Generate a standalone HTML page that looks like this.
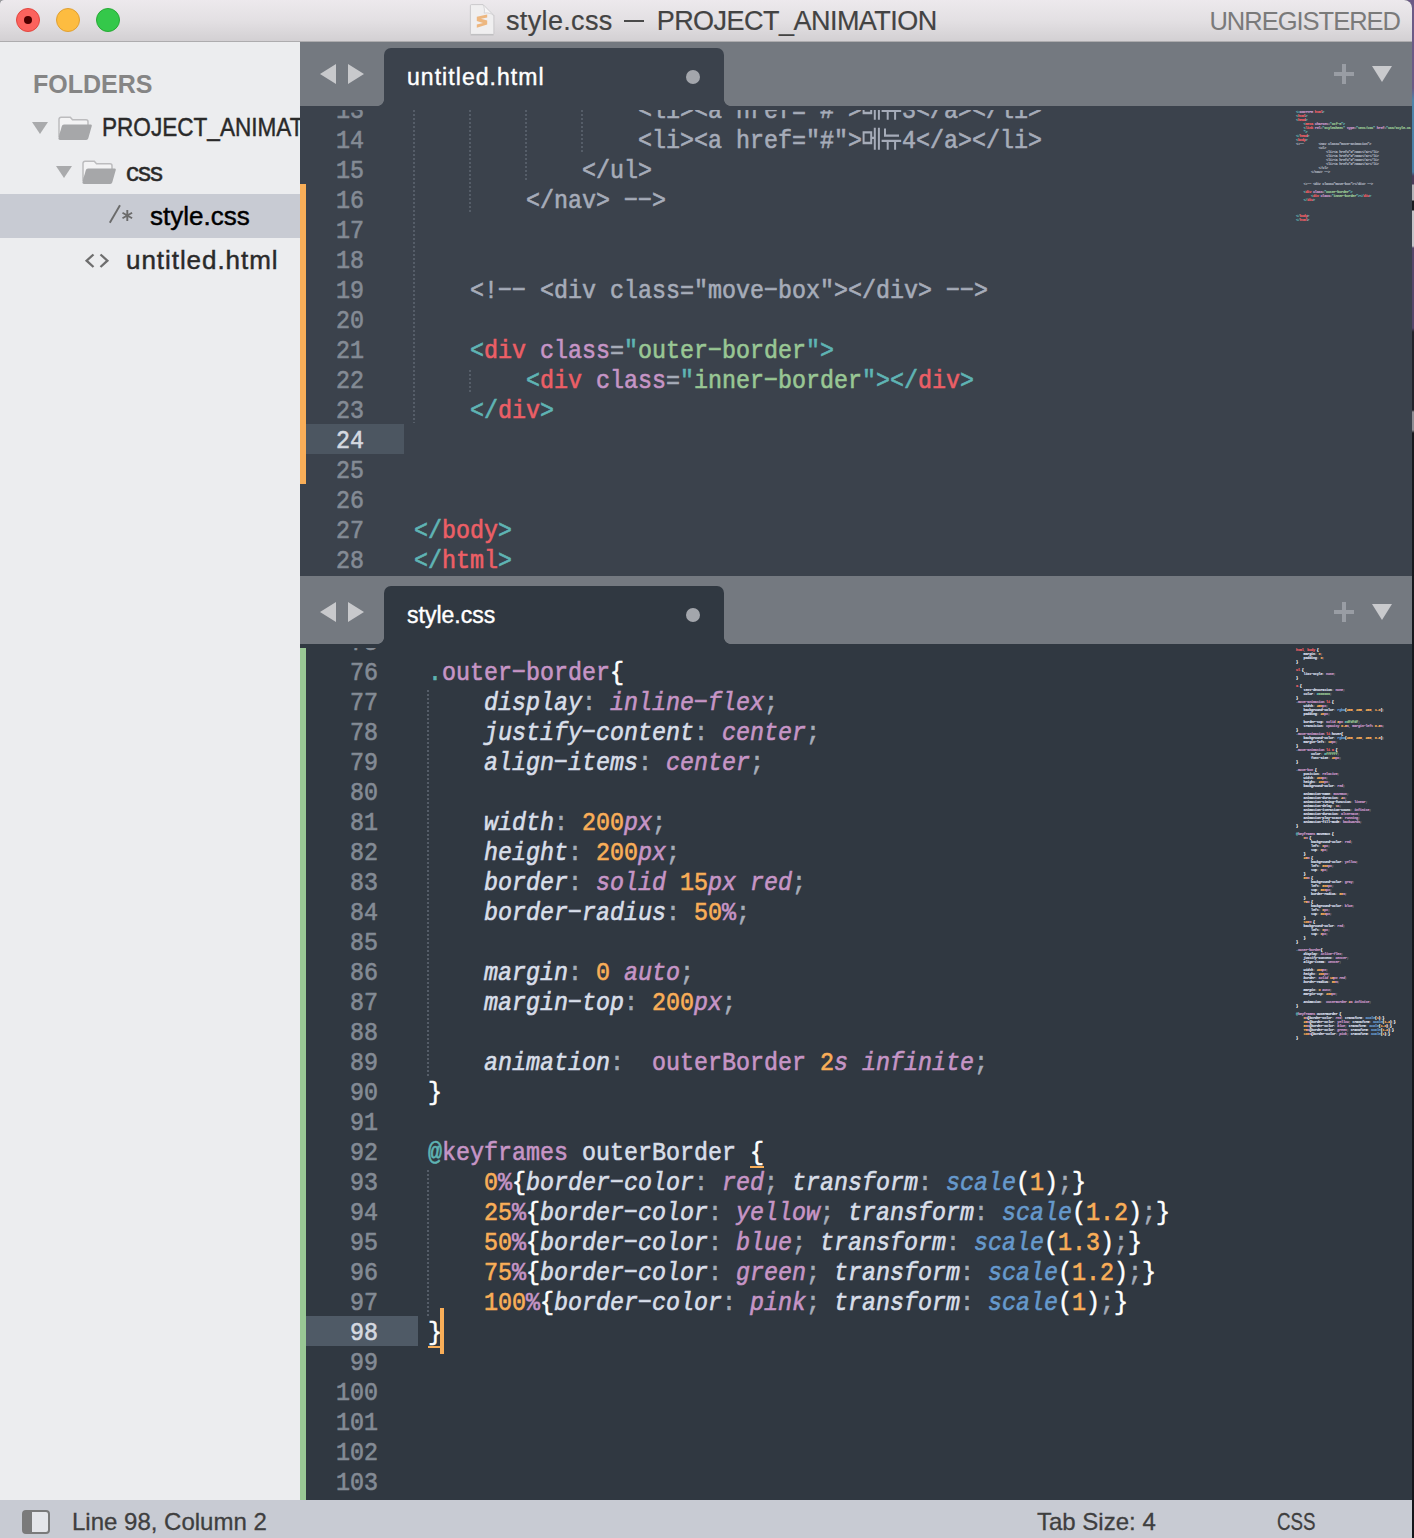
<!DOCTYPE html>
<html>
<head>
<meta charset="utf-8">
<title>style.css — PROJECT_ANIMATION</title>
<style>
*{box-sizing:border-box;margin:0;padding:0}
html,body{width:1414px;height:1538px;overflow:hidden;background:#6b5a86}
body{position:relative;font-family:"Liberation Sans",sans-serif}
#desk{position:absolute;left:1410px;top:0;width:4px;height:1538px;
  background:linear-gradient(#6b5a86 0,#6b5a86 88px,#4d84ab 100px,#4a7fa6 172px,#4a3d5a 176px,#4a3d5a 184px,#b4b4b8 185px,#b4b4b8 200px,#1b1b20 201px,#1b1b20 210px,#c4c4c8 211px,#c4c4c8 246px,#55476a 248px,#55476a 328px,#22222a 332px,#22222a 410px,#8e8e94 412px,#8e8e94 430px,#17181d 433px,#14151a 100%)}
#win{position:absolute;left:0;top:0;width:1412px;height:1538px;overflow:hidden;border-radius:4px 8px 0 0;background:#303841}
/* ---- title bar ---- */
#title{position:absolute;left:0;top:0;width:1412px;height:42px;
  background:linear-gradient(#ede9ed 0,#e3e0e3 50%,#d3d0d3 100%);border-bottom:1px solid #adacae}
.tl{position:absolute;top:8px;width:24px;height:24px;border-radius:50%}
#tl1{left:16px;background:#fc625d;border:1px solid #e2463f}
#tl1:after{content:"";position:absolute;left:7px;top:7px;width:8px;height:8px;border-radius:50%;background:#4d0000}
#tl2{left:56px;background:#fdbc40;border:1px solid #e0a033}
#tl3{left:96px;background:#34c84a;border:1px solid #27aa35}
#ttext{position:absolute;left:506px;top:5px;font-size:27px;line-height:32px;color:#434343;-webkit-text-stroke:0.2px #434343;white-space:nowrap}
#unreg{position:absolute;right:12px;top:5px;font-size:25.5px;letter-spacing:-1px;line-height:32px;color:#7a7a7a;white-space:nowrap}
#ticon{position:absolute;left:469px;top:3px}
/* ---- sidebar ---- */
#side{position:absolute;left:0;top:42px;width:300px;height:1458px;background:#ecedef;overflow:hidden}
#side .hd{position:absolute;left:33px;top:26px;font-size:25px;line-height:32px;font-weight:bold;color:#858585;white-space:nowrap}
.row{position:absolute;left:0;width:300px;height:44px;font-size:26px;line-height:44px;color:#2a2a2a;white-space:nowrap;-webkit-text-stroke:0.45px currentColor}
.row.sel{background:#c8cbd3;color:#000}
.row span{position:absolute;top:0}
.row svg{position:absolute}
/* ---- tab bars ---- */
.tabbar{position:absolute;left:300px;width:1112px;background:#747980;overflow:hidden}
.tab{position:absolute;left:84px;width:340px;border-radius:7px 7px 0 0}
.tab:before,.tab:after{content:"";position:absolute;bottom:0;width:7px;height:7px}
.tab:before{left:-7px;background:radial-gradient(circle at 0 0,transparent 6.6px,var(--c) 7.4px)}
.tab:after{right:-7px;background:radial-gradient(circle at 100% 0,transparent 6.6px,var(--c) 7.4px)}
.tab .lbl{position:absolute;left:23px;font-size:23px;color:#fff;white-space:nowrap;-webkit-text-stroke:0.4px #fff}
.tab .dot{position:absolute;left:302px;width:14px;height:14px;border-radius:50%;background:#a3a6ac}
/* ---- editors ---- */
.ed{position:absolute;left:300px;width:1112px;overflow:hidden;font-family:"Liberation Mono",monospace;font-size:23.33px;color:#d8dee9}
.ln,.no{position:absolute;height:30px;line-height:30px;white-space:pre;transform-origin:0 21.2px;transform:translateY(3px) scaleY(1.13);-webkit-text-stroke:0.55px currentColor}
.no{left:0;text-align:right;color:#848b95}
.cur.no{color:#d5d9e0}
.strip{position:absolute;left:0;width:6px}
.guide{position:absolute;width:2px;background:repeating-linear-gradient(#555d68 0,#555d68 2px,transparent 2px,transparent 4px)}
.t{color:#5fb4b4}.r{color:#ec5f66}.p{color:#c695c6}.pi{color:#c695c6;font-style:italic}
.g{color:#99c794}.o{color:#f9ae58}.bi{color:#6699cc;font-style:italic}.b{color:#6699cc}.w{color:#fff}
.wu{color:#fff}
.fi{color:#d8dee9;font-style:italic}.f{color:#d8dee9}.c{color:#a6acb9}.s{color:#a6acb9}
.nums .no{width:100%}
.ko{display:inline-block;vertical-align:top}
.caret{display:inline-block;width:3px;height:30px;background:#f9ae58;vertical-align:top;margin-left:-1px}
.mini{position:absolute;left:996px;width:900px;font-family:"Liberation Mono",monospace;font-size:27px;letter-spacing:-2.203px;line-height:30px;white-space:pre;
  transform-origin:0 0;transform:scale(0.134,0.13333);font-weight:bold;-webkit-text-stroke:1.2px currentColor}
.mini div{height:30px}
.mini .s{opacity:.55}
/* ---- status bar ---- */
#status{position:absolute;left:0;top:1500px;width:1412px;height:38px;background:#c8cbd3;font-size:24px;line-height:38px;color:#3f3f3f;white-space:nowrap;-webkit-text-stroke:0.3px #3f3f3f}
#status span{position:absolute;top:3px}
</style>
</head>
<body>
<div style="position:absolute;left:0;top:0;width:6px;height:6px;background:#9a9a9c"></div>
<div id="desk"></div>
<div id="win">

<!-- title bar -->
<div id="title">
  <div class="tl" id="tl1"></div><div class="tl" id="tl2"></div><div class="tl" id="tl3"></div>
  <svg id="ticon" width="28" height="36" viewBox="0 0 28 36">
    <path d="M2.4 1.6h11.6l10.9 11v17.8a1 1 0 0 1-1 1H2.400a1 1 0 0 1-1-1V2.6a1 1 0 0 1 1-1z" fill="#f0eff0" stroke="#c6c5c7" stroke-width="0.9"/>
    <path d="M1.6 31.9h23" stroke="#b9b8ba" stroke-width="1"/>
    <path d="M14 1.600c1.400 2.800 1.800 5.800 1.200 8.600c3-.8 6.600-.2 9.700 2.400z" fill="#f7f6f7" stroke="#cfced0" stroke-width="0.8"/>
    <path d="M18.200 11.400L7.800 13.800V18l6.200 2-6.200 1.500v3.300l10.400-3.200V17.600l-6.200-1.800 6.200-1.200z" fill="#edb780"/>
  </svg>
  <div id="ttext"><span style="letter-spacing:0.35px">style.css</span><span style="display:inline-block;width:20px;height:2px;background:#4a4a4a;vertical-align:8px;margin:0 13px 0 11px"></span><span style="letter-spacing:-0.53px">PROJECT_ANIMATION</span></div>
  <div id="unreg">UNREGISTERED</div>
</div>

<!-- sidebar -->
<div id="side">
  <div class="hd">FOLDERS</div>
  <div class="row" style="top:64px">
    <svg style="left:32px;top:16px" width="16" height="12"><path d="M0 0h16l-8 12z" fill="#a9aaac"/></svg>
    <svg style="left:58px;top:10px" width="34" height="24" viewBox="0 0 34 24"><path d="M1 21V3.3a2 2 0 0 1 2-2h9.3l2.2 2.5H28a2 2 0 0 1 2 2V10H6z" fill="#f3f3f4" stroke="#bcbcbe" stroke-width="1.5"/><path d="M6 8.6h26.4a1.3 1.3 0 0 1 1.3 1.7l-3.4 12a2.2 2.2 0 0 1-2.1 1.6H2a1.6 1.6 0 0 1-1.5-2l3.2-11.4a2.5 2.5 0 0 1 2.3-1.9z" fill="#a6a7a9"/></svg>
    <span style="left:102px;top:-1px;transform-origin:0 0;transform:scaleX(0.868)">PROJECT_ANIMATION</span>
  </div>
  <div class="row" style="top:108px">
    <svg style="left:56px;top:16px" width="16" height="12"><path d="M0 0h16l-8 12z" fill="#a9aaac"/></svg>
    <svg style="left:82px;top:10px" width="34" height="24" viewBox="0 0 34 24"><path d="M1 21V3.3a2 2 0 0 1 2-2h9.3l2.2 2.5H28a2 2 0 0 1 2 2V10H6z" fill="#f3f3f4" stroke="#bcbcbe" stroke-width="1.5"/><path d="M6 8.6h26.4a1.3 1.3 0 0 1 1.3 1.7l-3.4 12a2.2 2.2 0 0 1-2.1 1.6H2a1.6 1.6 0 0 1-1.5-2l3.2-11.4a2.5 2.5 0 0 1 2.3-1.9z" fill="#a6a7a9"/></svg>
    <span style="left:126px;letter-spacing:-1px">css</span>
  </div>
  <div class="row sel" style="top:152px">
    <svg style="left:108px;top:10px" width="27" height="20" viewBox="0 0 27 20"><g stroke="#6b6b6b" stroke-width="1.9" fill="none"><path d="M12 1.2L1.8 18.8"/><path d="M19.3 6v11M14.5 8.8l9.6 5.5M24.1 8.8l-9.6 5.5"/></g></svg>
    <span style="left:150px">style.css</span>
  </div>
  <div class="row" style="top:196px">
    <svg style="left:84px;top:15px" width="26" height="16" viewBox="0 0 26 16"><path d="M9.5 1.5L2.6 7.7l6.9 6.3M16.5 1.5l6.9 6.2-6.9 6.3" fill="none" stroke="#6e6e6e" stroke-width="2.3"/></svg>
    <span style="left:126px;letter-spacing:0.95px">untitled.html</span>
  </div>
</div>

<!-- top tab bar -->
<div class="tabbar" style="top:42px;height:64px">
  <svg style="position:absolute;left:20px;top:22px" width="46" height="20"><path d="M16 0v20L0 10zM28 0v20l16-10z" fill="#c8c9cc"/></svg>
  <div class="tab" style="top:6px;height:58px;background:#3b424c;--c:#3b424c">
    <div class="lbl" style="top:15px;line-height:28px;letter-spacing:1.05px">untitled.html</div>
    <div class="dot" style="top:22px"></div>
  </div>
  <svg style="position:absolute;left:1034px;top:22px" width="60" height="20"><path d="M8 0h4v8h8v4h-8v8H8v-8H0V8h8z" fill="#999da4"/><path d="M38 2h20L48 18z" fill="#c9cacd"/></svg>
</div>

<!-- top editor -->
<div class="ed" id="ed1" style="top:106px;height:470px;background:#3b424c">
  <div class="strip" style="top:78px;height:300px;background:#f9ae58"></div>
  <div style="position:absolute;left:6px;top:318px;width:98px;height:30px;background:#4c5661"></div>
  <div class="guide" style="left:113px;top:0;height:317px"></div>
  <div class="guide" style="left:169px;top:0;height:106px"></div>
  <div class="guide" style="left:225px;top:0;height:76px"></div>
  <div class="guide" style="left:281px;top:0;height:46px"></div>
  <div class="guide" style="left:169px;top:264px;height:24px"></div>
  <div class="nums" style="position:absolute;left:0;top:0;width:64px">
<div class="no" style="top:-12px">13</div>
<div class="no" style="top:18px">14</div>
<div class="no" style="top:48px">15</div>
<div class="no" style="top:78px">16</div>
<div class="no" style="top:108px">17</div>
<div class="no" style="top:138px">18</div>
<div class="no" style="top:168px">19</div>
<div class="no" style="top:198px">20</div>
<div class="no" style="top:228px">21</div>
<div class="no" style="top:258px">22</div>
<div class="no" style="top:288px">23</div>
<div class="no cur" style="top:318px">24</div>
<div class="no" style="top:348px">25</div>
<div class="no" style="top:378px">26</div>
<div class="no" style="top:408px">27</div>
<div class="no" style="top:438px">28</div>
  </div>
  <div class="code" style="position:absolute;left:114px;top:0">
<div class="ln" style="top:-12px">                <span class="c">&lt;li&gt;&lt;a href="#"&gt;</span><svg class="ko" width="40" height="30" viewBox="0 0 40 30"><g fill="none" stroke="#a6acb9" stroke-width="2"><path d="M1.6 7.2h7.6v9.4H1.6zM12.8 3.2v19.4M16.9 3.2v19.4M9.2 12h3.6"/><path d="M23 3.8v6.3h14M19.6 14.8h19.6M25.7 14.8v7.8M33.1 14.8v7.8"/></g></svg><span class="c">3&lt;/a&gt;&lt;/li&gt;</span></div>
<div class="ln" style="top:18px">                <span class="c">&lt;li&gt;&lt;a href="#"&gt;</span><svg class="ko" width="40" height="30" viewBox="0 0 40 30"><g fill="none" stroke="#a6acb9" stroke-width="2"><path d="M1.6 7.2h7.6v9.4H1.6zM12.8 3.2v19.4M16.9 3.2v19.4M9.2 12h3.6"/><path d="M23 3.8v6.3h14M19.6 14.8h19.6M25.7 14.8v7.8M33.1 14.8v7.8"/></g></svg><span class="c">4&lt;/a&gt;&lt;/li&gt;</span></div>
<div class="ln" style="top:48px">            <span class="c">&lt;/ul&gt;</span></div>
<div class="ln" style="top:78px">        <span class="c">&lt;/nav&gt; −−&gt;</span></div>
<div class="ln" style="top:108px"></div>
<div class="ln" style="top:138px"></div>
<div class="ln" style="top:168px">    <span class="c">&lt;!−− &lt;div class="move−box"&gt;&lt;/div&gt; −−&gt;</span></div>
<div class="ln" style="top:198px"></div>
<div class="ln" style="top:228px">    <span class="t">&lt;</span><span class="r">div</span> <span class="p">class</span><span class="s">=</span><span class="t">"</span><span class="g">outer−border</span><span class="t">"&gt;</span></div>
<div class="ln" style="top:258px">        <span class="t">&lt;</span><span class="r">div</span> <span class="p">class</span><span class="s">=</span><span class="t">"</span><span class="g">inner−border</span><span class="t">"&gt;&lt;/</span><span class="r">div</span><span class="t">&gt;</span></div>
<div class="ln" style="top:288px">    <span class="t">&lt;/</span><span class="r">div</span><span class="t">&gt;</span></div>
<div class="ln" style="top:318px"></div>
<div class="ln" style="top:348px"></div>
<div class="ln" style="top:378px"></div>
<div class="ln" style="top:408px"><span class="t">&lt;/</span><span class="r">body</span><span class="t">&gt;</span></div>
<div class="ln" style="top:438px"><span class="t">&lt;/</span><span class="r">html</span><span class="t">&gt;</span></div>
  </div>
  <div style="position:absolute;left:0;top:0;width:1112px;height:4px;background:#3b424c"></div>
  <div class="mini" style="top:0px">
<div><span class="t">&lt;!</span><span class="p">DOCTYPE</span> <span class="r">html</span><span class="t">&gt;</span></div><div><span class="t">&lt;</span><span class="r">html</span><span class="t">&gt;</span></div><div><span class="t">&lt;</span><span class="r">head</span><span class="t">&gt;</span></div><div>    <span class="t">&lt;</span><span class="r">meta</span> <span class="p">charset</span><span class="s">=</span><span class="t">"</span><span class="g">utf−8</span><span class="t">"&gt;</span></div><div>    <span class="t">&lt;</span><span class="r">link</span> <span class="p">rel</span><span class="s">=</span><span class="t">"</span><span class="g">stylesheet</span><span class="t">"</span> <span class="p">type</span><span class="s">=</span><span class="t">"</span><span class="g">text/css</span><span class="t">"</span> <span class="p">href</span><span class="s">=</span><span class="t">"</span><span class="g">css/style.cs</span></div><div>    <span class="t">"&gt;</span></div><div><span class="t">&lt;/</span><span class="r">head</span><span class="t">&gt;</span></div><div><span class="t">&lt;</span><span class="r">body</span><span class="t">&gt;</span></div><div><span class="c">&lt;!−−        &lt;nav class="move−animation"&gt;</span></div><div>            <span class="c">&lt;ul&gt;</span></div><div>                <span class="c">&lt;li&gt;&lt;a href="#"&gt;##1&lt;/a&gt;&lt;/li&gt;</span></div><div>                <span class="c">&lt;li&gt;&lt;a href="#"&gt;##2&lt;/a&gt;&lt;/li&gt;</span></div><div>                <span class="c">&lt;li&gt;&lt;a href="#"&gt;##3&lt;/a&gt;&lt;/li&gt;</span></div><div>                <span class="c">&lt;li&gt;&lt;a href="#"&gt;##4&lt;/a&gt;&lt;/li&gt;</span></div><div>            <span class="c">&lt;/ul&gt;</span></div><div>        <span class="c">&lt;/nav&gt; −−&gt;</span></div><div></div><div></div><div>    <span class="c">&lt;!−− &lt;div class="move−box"&gt;&lt;/div&gt; −−&gt;</span></div><div></div><div>    <span class="t">&lt;</span><span class="r">div</span> <span class="p">class</span><span class="s">=</span><span class="t">"</span><span class="g">outer−border</span><span class="t">"&gt;</span></div><div>        <span class="t">&lt;</span><span class="r">div</span> <span class="p">class</span><span class="s">=</span><span class="t">"</span><span class="g">inner−border</span><span class="t">"&gt;&lt;/</span><span class="r">div</span><span class="t">&gt;</span></div><div>    <span class="t">&lt;/</span><span class="r">div</span><span class="t">&gt;</span></div><div></div><div></div><div></div><div><span class="t">&lt;/</span><span class="r">body</span><span class="t">&gt;</span></div><div><span class="t">&lt;/</span><span class="r">html</span><span class="t">&gt;</span></div>
  </div>
</div>

<!-- bottom tab bar -->
<div class="tabbar" style="top:576px;height:68px">
  <svg style="position:absolute;left:20px;top:26px" width="46" height="20"><path d="M16 0v20L0 10zM28 0v20l16-10z" fill="#c8c9cc"/></svg>
  <div class="tab" style="top:10px;height:58px;background:#303841;--c:#303841">
    <div class="lbl" style="top:15px;line-height:28px">style.css</div>
    <div class="dot" style="top:22px"></div>
  </div>
  <svg style="position:absolute;left:1034px;top:26px" width="60" height="20"><path d="M8 0h4v8h8v4h-8v8H8v-8H0V8h8z" fill="#999da4"/><path d="M38 2h20L48 18z" fill="#c9cacd"/></svg>
</div>

<!-- bottom editor -->
<div class="ed" id="ed2" style="top:644px;height:856px;background:#303841">
  <div class="strip" style="top:4px;height:852px;background:#99c794"></div>
  <div style="position:absolute;left:6px;top:672px;width:112px;height:30px;background:#4f5a66"></div>
  <div style="position:absolute;left:140px;top:664px;width:4px;height:46px;background:#f9ae58"></div>
  <div style="position:absolute;left:128px;top:702px;width:13px;height:2px;background:#f9ae58"></div>
  <div style="position:absolute;left:450px;top:522px;width:14px;height:2px;background:#f9ae58"></div>
  <div class="guide" style="left:127px;top:46px;height:386px"></div>
  <div class="guide" style="left:127px;top:526px;height:146px"></div>
  <div class="nums" style="position:absolute;left:0;top:0;width:78px">
<div class="no" style="top:-18px">75</div>
<div class="no" style="top:12px">76</div>
<div class="no" style="top:42px">77</div>
<div class="no" style="top:72px">78</div>
<div class="no" style="top:102px">79</div>
<div class="no" style="top:132px">80</div>
<div class="no" style="top:162px">81</div>
<div class="no" style="top:192px">82</div>
<div class="no" style="top:222px">83</div>
<div class="no" style="top:252px">84</div>
<div class="no" style="top:282px">85</div>
<div class="no" style="top:312px">86</div>
<div class="no" style="top:342px">87</div>
<div class="no" style="top:372px">88</div>
<div class="no" style="top:402px">89</div>
<div class="no" style="top:432px">90</div>
<div class="no" style="top:462px">91</div>
<div class="no" style="top:492px">92</div>
<div class="no" style="top:522px">93</div>
<div class="no" style="top:552px">94</div>
<div class="no" style="top:582px">95</div>
<div class="no" style="top:612px">96</div>
<div class="no" style="top:642px">97</div>
<div class="no cur" style="top:672px">98</div>
<div class="no" style="top:702px">99</div>
<div class="no" style="top:732px">100</div>
<div class="no" style="top:762px">101</div>
<div class="no" style="top:792px">102</div>
<div class="no" style="top:822px">103</div>
  </div>
  <div class="code" style="position:absolute;left:128px;top:0">
<div class="ln" style="top:-18px"></div>
<div class="ln" style="top:12px"><span class="t">.</span><span class="p">outer−border</span><span class="w">{</span></div>
<div class="ln" style="top:42px">    <span class="fi">display</span><span class="s">:</span> <span class="pi">inline−flex</span><span class="s">;</span></div>
<div class="ln" style="top:72px">    <span class="fi">justify−content</span><span class="s">:</span> <span class="pi">center</span><span class="s">;</span></div>
<div class="ln" style="top:102px">    <span class="fi">align−items</span><span class="s">:</span> <span class="pi">center</span><span class="s">;</span></div>
<div class="ln" style="top:132px"></div>
<div class="ln" style="top:162px">    <span class="fi">width</span><span class="s">:</span> <span class="o">200</span><span class="pi">px</span><span class="s">;</span></div>
<div class="ln" style="top:192px">    <span class="fi">height</span><span class="s">:</span> <span class="o">200</span><span class="pi">px</span><span class="s">;</span></div>
<div class="ln" style="top:222px">    <span class="fi">border</span><span class="s">:</span> <span class="pi">solid</span> <span class="o">15</span><span class="pi">px</span> <span class="pi">red</span><span class="s">;</span></div>
<div class="ln" style="top:252px">    <span class="fi">border−radius</span><span class="s">:</span> <span class="o">50</span><span class="p">%</span><span class="s">;</span></div>
<div class="ln" style="top:282px"></div>
<div class="ln" style="top:312px">    <span class="fi">margin</span><span class="s">:</span> <span class="o">0</span> <span class="pi">auto</span><span class="s">;</span></div>
<div class="ln" style="top:342px">    <span class="fi">margin−top</span><span class="s">:</span> <span class="o">200</span><span class="pi">px</span><span class="s">;</span></div>
<div class="ln" style="top:372px"></div>
<div class="ln" style="top:402px">    <span class="fi">animation</span><span class="s">:</span>  <span class="p">outerBorder</span> <span class="o">2</span><span class="pi">s</span> <span class="pi">infinite</span><span class="s">;</span></div>
<div class="ln" style="top:432px"><span class="w">}</span></div>
<div class="ln" style="top:462px"></div>
<div class="ln" style="top:492px"><span class="t">@</span><span class="p">keyframes</span> <span class="f">outerBorder</span> <span class="wu">{</span></div>
<div class="ln" style="top:522px">    <span class="o">0</span><span class="p">%</span><span class="w">{</span><span class="fi">border−color</span><span class="s">:</span> <span class="pi">red</span><span class="s">;</span> <span class="fi">transform</span><span class="s">:</span> <span class="bi">scale</span><span class="w">(</span><span class="o">1</span><span class="w">)</span><span class="s">;</span><span class="w">}</span></div>
<div class="ln" style="top:552px">    <span class="o">25</span><span class="p">%</span><span class="w">{</span><span class="fi">border−color</span><span class="s">:</span> <span class="pi">yellow</span><span class="s">;</span> <span class="fi">transform</span><span class="s">:</span> <span class="bi">scale</span><span class="w">(</span><span class="o">1.2</span><span class="w">)</span><span class="s">;</span><span class="w">}</span></div>
<div class="ln" style="top:582px">    <span class="o">50</span><span class="p">%</span><span class="w">{</span><span class="fi">border−color</span><span class="s">:</span> <span class="pi">blue</span><span class="s">;</span> <span class="fi">transform</span><span class="s">:</span> <span class="bi">scale</span><span class="w">(</span><span class="o">1.3</span><span class="w">)</span><span class="s">;</span><span class="w">}</span></div>
<div class="ln" style="top:612px">    <span class="o">75</span><span class="p">%</span><span class="w">{</span><span class="fi">border−color</span><span class="s">:</span> <span class="pi">green</span><span class="s">;</span> <span class="fi">transform</span><span class="s">:</span> <span class="bi">scale</span><span class="w">(</span><span class="o">1.2</span><span class="w">)</span><span class="s">;</span><span class="w">}</span></div>
<div class="ln" style="top:642px">    <span class="o">100</span><span class="p">%</span><span class="w">{</span><span class="fi">border−color</span><span class="s">:</span> <span class="pi">pink</span><span class="s">;</span> <span class="fi">transform</span><span class="s">:</span> <span class="bi">scale</span><span class="w">(</span><span class="o">1</span><span class="w">)</span><span class="s">;</span><span class="w">}</span></div>
<div class="ln" style="top:672px"><span class="wu">}</span></div>
<div class="ln" style="top:702px"></div>
<div class="ln" style="top:732px"></div>
<div class="ln" style="top:762px"></div>
<div class="ln" style="top:792px"></div>
<div class="ln" style="top:822px"></div>
  </div>
  <div style="position:absolute;left:0;top:0;width:1112px;height:4px;background:#303841"></div>
  <div class="mini" style="top:0px">
<div><span class="r">html</span><span class="s">,</span> <span class="r">body</span> <span class="w">{</span></div><div>    <span class="f">margin</span><span class="s">:</span> <span class="o">0</span><span class="s">;</span></div><div>    <span class="f">padding</span><span class="s">:</span> <span class="o">0</span><span class="s">;</span></div><div><span class="w">}</span></div><div></div><div><span class="r">ul</span> <span class="w">{</span></div><div>    <span class="f">list−style</span><span class="s">:</span> <span class="p">none</span><span class="s">;</span></div><div><span class="w">}</span></div><div></div><div><span class="r">a</span> <span class="w">{</span></div><div>    <span class="f">text−decoration</span><span class="s">:</span> <span class="p">none</span><span class="s">;</span></div><div>    <span class="f">color</span><span class="s">:</span> <span class="t">#</span><span class="g">000000</span><span class="s">;</span></div><div><span class="w">}</span></div><div><span class="t">.</span><span class="p">move−animation</span> <span class="r">li</span> <span class="w">{</span></div><div>    <span class="f">width</span><span class="s">:</span> <span class="o">250</span><span class="p">px</span><span class="s">;</span></div><div>    <span class="f">background−color</span><span class="s">:</span> <span class="b">rgba</span><span class="w">(</span><span class="o">255</span><span class="s">,</span> <span class="o">255</span><span class="s">,</span> <span class="o">255</span><span class="s">,</span> <span class="o">1.0</span><span class="w">)</span><span class="s">;</span></div><div>    <span class="f">padding</span><span class="s">:</span> <span class="o">20</span><span class="p">px</span><span class="s">;</span></div><div></div><div>    <span class="f">border−top</span><span class="s">:</span> <span class="p">solid</span> <span class="o">5</span><span class="p">px</span> <span class="t">#</span><span class="g">dfdfdf</span><span class="s">;</span></div><div>    <span class="f">transition</span><span class="s">:</span> <span class="p">opacity</span> <span class="o">0.5</span><span class="p">s</span><span class="s">,</span> <span class="p">margin−left</span> <span class="o">0.5</span><span class="p">s</span><span class="s">;</span></div><div><span class="w">}</span></div><div><span class="t">.</span><span class="p">move−animation</span> <span class="r">li</span><span class="s">:</span><span class="f">hover</span><span class="w">{</span></div><div>    <span class="f">background−color</span><span class="s">:</span> <span class="b">rgba</span><span class="w">(</span><span class="o">255</span><span class="s">,</span> <span class="o">255</span><span class="s">,</span> <span class="o">255</span><span class="s">,</span> <span class="o">0.5</span><span class="w">)</span><span class="s">;</span></div><div>    <span class="f">margin−left</span><span class="s">:</span> <span class="o">10</span><span class="p">px</span><span class="s">;</span></div><div><span class="w">}</span></div><div><span class="t">.</span><span class="p">move−animation</span> <span class="r">li</span> <span class="r">a</span> <span class="w">{</span></div><div>        <span class="f">color</span><span class="s">:</span> <span class="t">#</span><span class="g">ffffff</span><span class="s">;</span></div><div>        <span class="f">font−size</span><span class="s">:</span> <span class="o">20</span><span class="p">px</span><span class="s">;</span></div><div><span class="w">}</span></div><div></div><div><span class="t">.</span><span class="p">move−box</span> <span class="w">{</span></div><div>    <span class="f">position</span><span class="s">:</span> <span class="p">relative</span><span class="s">;</span></div><div>    <span class="f">width</span><span class="s">:</span> <span class="o">200</span><span class="p">px</span><span class="s">;</span></div><div>    <span class="f">height</span><span class="s">:</span> <span class="o">200</span><span class="p">px</span><span class="s">;</span></div><div>    <span class="f">background−color</span><span class="s">:</span> <span class="p">red</span><span class="s">;</span></div><div></div><div>    <span class="f">animation−name</span><span class="s">:</span> <span class="p">moveBox</span><span class="s">;</span></div><div>    <span class="f">animation−duration</span><span class="s">:</span> <span class="o">4</span><span class="p">s</span><span class="s">;</span></div><div>    <span class="f">animation−timing−function</span><span class="s">:</span> <span class="p">linear</span><span class="s">;</span></div><div>    <span class="f">animation−delay</span><span class="s">:</span> <span class="o">1</span><span class="p">s</span><span class="s">;</span></div><div>    <span class="f">animation−iteration−count</span><span class="s">:</span> <span class="p">infinite</span><span class="s">;</span></div><div>    <span class="f">animation−duration</span><span class="s">:</span> <span class="p">alternate</span><span class="s">;</span></div><div>    <span class="f">animation−play−state</span><span class="s">:</span> <span class="p">running</span><span class="s">;</span></div><div>    <span class="f">animation−fill−mode</span><span class="s">:</span> <span class="p">backwards</span><span class="s">;</span></div><div><span class="w">}</span></div><div></div><div><span class="t">@</span><span class="p">keyframes</span> <span class="f">moveBox</span> <span class="w">{</span></div><div>    <span class="o">0</span><span class="p">%</span> <span class="w">{</span></div><div>        <span class="f">background−color</span><span class="s">:</span> <span class="p">red</span><span class="s">;</span></div><div>        <span class="f">left</span><span class="s">:</span> <span class="o">0</span><span class="p">px</span><span class="s">;</span></div><div>        <span class="f">top</span><span class="s">:</span> <span class="o">0</span><span class="p">px</span><span class="s">;</span></div><div>    <span class="w">}</span></div><div>    <span class="o">25</span><span class="p">%</span> <span class="w">{</span></div><div>        <span class="f">background−color</span><span class="s">:</span> <span class="p">yellow</span><span class="s">;</span></div><div>        <span class="f">left</span><span class="s">:</span> <span class="o">500</span><span class="p">px</span><span class="s">;</span></div><div>        <span class="f">top</span><span class="s">:</span> <span class="o">0</span><span class="p">px</span><span class="s">;</span></div><div>    <span class="w">}</span></div><div>    <span class="o">50</span><span class="p">%</span> <span class="w">{</span></div><div>        <span class="f">background−color</span><span class="s">:</span> <span class="p">gray</span><span class="s">;</span></div><div>        <span class="f">left</span><span class="s">:</span> <span class="o">500</span><span class="p">px</span><span class="s">;</span></div><div>        <span class="f">top</span><span class="s">:</span> <span class="o">500</span><span class="p">px</span><span class="s">;</span></div><div>        <span class="f">border−radius</span><span class="s">:</span> <span class="o">50</span><span class="p">%</span><span class="s">;</span></div><div>    <span class="w">}</span></div><div>    <span class="o">75</span><span class="p">%</span> <span class="w">{</span></div><div>        <span class="f">background−color</span><span class="s">:</span> <span class="p">blue</span><span class="s">;</span></div><div>        <span class="f">left</span><span class="s">:</span> <span class="o">0</span><span class="p">px</span><span class="s">;</span></div><div>        <span class="f">top</span><span class="s">:</span> <span class="o">500</span><span class="p">px</span><span class="s">;</span></div><div>    <span class="w">}</span></div><div>    <span class="o">100</span><span class="p">%</span> <span class="w">{</span></div><div>    <span class="f">background−color</span><span class="s">:</span> <span class="p">red</span><span class="s">;</span></div><div>        <span class="f">left</span><span class="s">:</span> <span class="o">0</span><span class="p">px</span><span class="s">;</span></div><div>        <span class="f">top</span><span class="s">:</span> <span class="o">0</span><span class="p">px</span><span class="s">;</span></div><div>    <span class="w">}</span></div><div><span class="w">}</span></div><div></div><div><span class="t">.</span><span class="p">outer−border</span><span class="w">{</span></div><div>    <span class="fi">display</span><span class="s">:</span> <span class="pi">inline−flex</span><span class="s">;</span></div><div>    <span class="fi">justify−content</span><span class="s">:</span> <span class="pi">center</span><span class="s">;</span></div><div>    <span class="fi">align−items</span><span class="s">:</span> <span class="pi">center</span><span class="s">;</span></div><div></div><div>    <span class="fi">width</span><span class="s">:</span> <span class="o">200</span><span class="pi">px</span><span class="s">;</span></div><div>    <span class="fi">height</span><span class="s">:</span> <span class="o">200</span><span class="pi">px</span><span class="s">;</span></div><div>    <span class="fi">border</span><span class="s">:</span> <span class="pi">solid</span> <span class="o">15</span><span class="pi">px</span> <span class="pi">red</span><span class="s">;</span></div><div>    <span class="fi">border−radius</span><span class="s">:</span> <span class="o">50</span><span class="p">%</span><span class="s">;</span></div><div></div><div>    <span class="fi">margin</span><span class="s">:</span> <span class="o">0</span> <span class="pi">auto</span><span class="s">;</span></div><div>    <span class="fi">margin−top</span><span class="s">:</span> <span class="o">200</span><span class="pi">px</span><span class="s">;</span></div><div></div><div>    <span class="fi">animation</span><span class="s">:</span>  <span class="p">outerBorder</span> <span class="o">2</span><span class="pi">s</span> <span class="pi">infinite</span><span class="s">;</span></div><div><span class="w">}</span></div><div></div><div><span class="t">@</span><span class="p">keyframes</span> <span class="f">outerBorder</span> <span class="wu">{</span></div><div>    <span class="o">0</span><span class="p">%</span><span class="w">{</span><span class="fi">border−color</span><span class="s">:</span> <span class="pi">red</span><span class="s">;</span> <span class="fi">transform</span><span class="s">:</span> <span class="bi">scale</span><span class="w">(</span><span class="o">1</span><span class="w">)</span><span class="s">;</span><span class="w">}</span></div><div>    <span class="o">25</span><span class="p">%</span><span class="w">{</span><span class="fi">border−color</span><span class="s">:</span> <span class="pi">yellow</span><span class="s">;</span> <span class="fi">transform</span><span class="s">:</span> <span class="bi">scale</span><span class="w">(</span><span class="o">1.2</span><span class="w">)</span><span class="s">;</span><span class="w">}</span></div><div>    <span class="o">50</span><span class="p">%</span><span class="w">{</span><span class="fi">border−color</span><span class="s">:</span> <span class="pi">blue</span><span class="s">;</span> <span class="fi">transform</span><span class="s">:</span> <span class="bi">scale</span><span class="w">(</span><span class="o">1.3</span><span class="w">)</span><span class="s">;</span><span class="w">}</span></div><div>    <span class="o">75</span><span class="p">%</span><span class="w">{</span><span class="fi">border−color</span><span class="s">:</span> <span class="pi">green</span><span class="s">;</span> <span class="fi">transform</span><span class="s">:</span> <span class="bi">scale</span><span class="w">(</span><span class="o">1.2</span><span class="w">)</span><span class="s">;</span><span class="w">}</span></div><div>    <span class="o">100</span><span class="p">%</span><span class="w">{</span><span class="fi">border−color</span><span class="s">:</span> <span class="pi">pink</span><span class="s">;</span> <span class="fi">transform</span><span class="s">:</span> <span class="bi">scale</span><span class="w">(</span><span class="o">1</span><span class="w">)</span><span class="s">;</span><span class="w">}</span></div><div><span class="wu">}</span></div>
  </div>
</div>

<!-- status bar -->
<div id="status">
  <svg style="position:absolute;left:22px;top:10px" width="28" height="24" viewBox="0 0 28 24"><rect x="1" y="1" width="26" height="22" rx="3" fill="#e4e5e9" stroke="#7a7a7a" stroke-width="2"/><path d="M1 4a3 3 0 0 1 3-3h6v22H4a3 3 0 0 1-3-3z" fill="#7a7a7a"/></svg>
  <span style="left:72px">Line 98, Column 2</span>
  <span style="left:1037px">Tab Size: 4</span>
  <span style="left:1277px;transform-origin:0 0;transform:scaleX(0.78)">CSS</span>
</div>

</div>
</body>
</html>
